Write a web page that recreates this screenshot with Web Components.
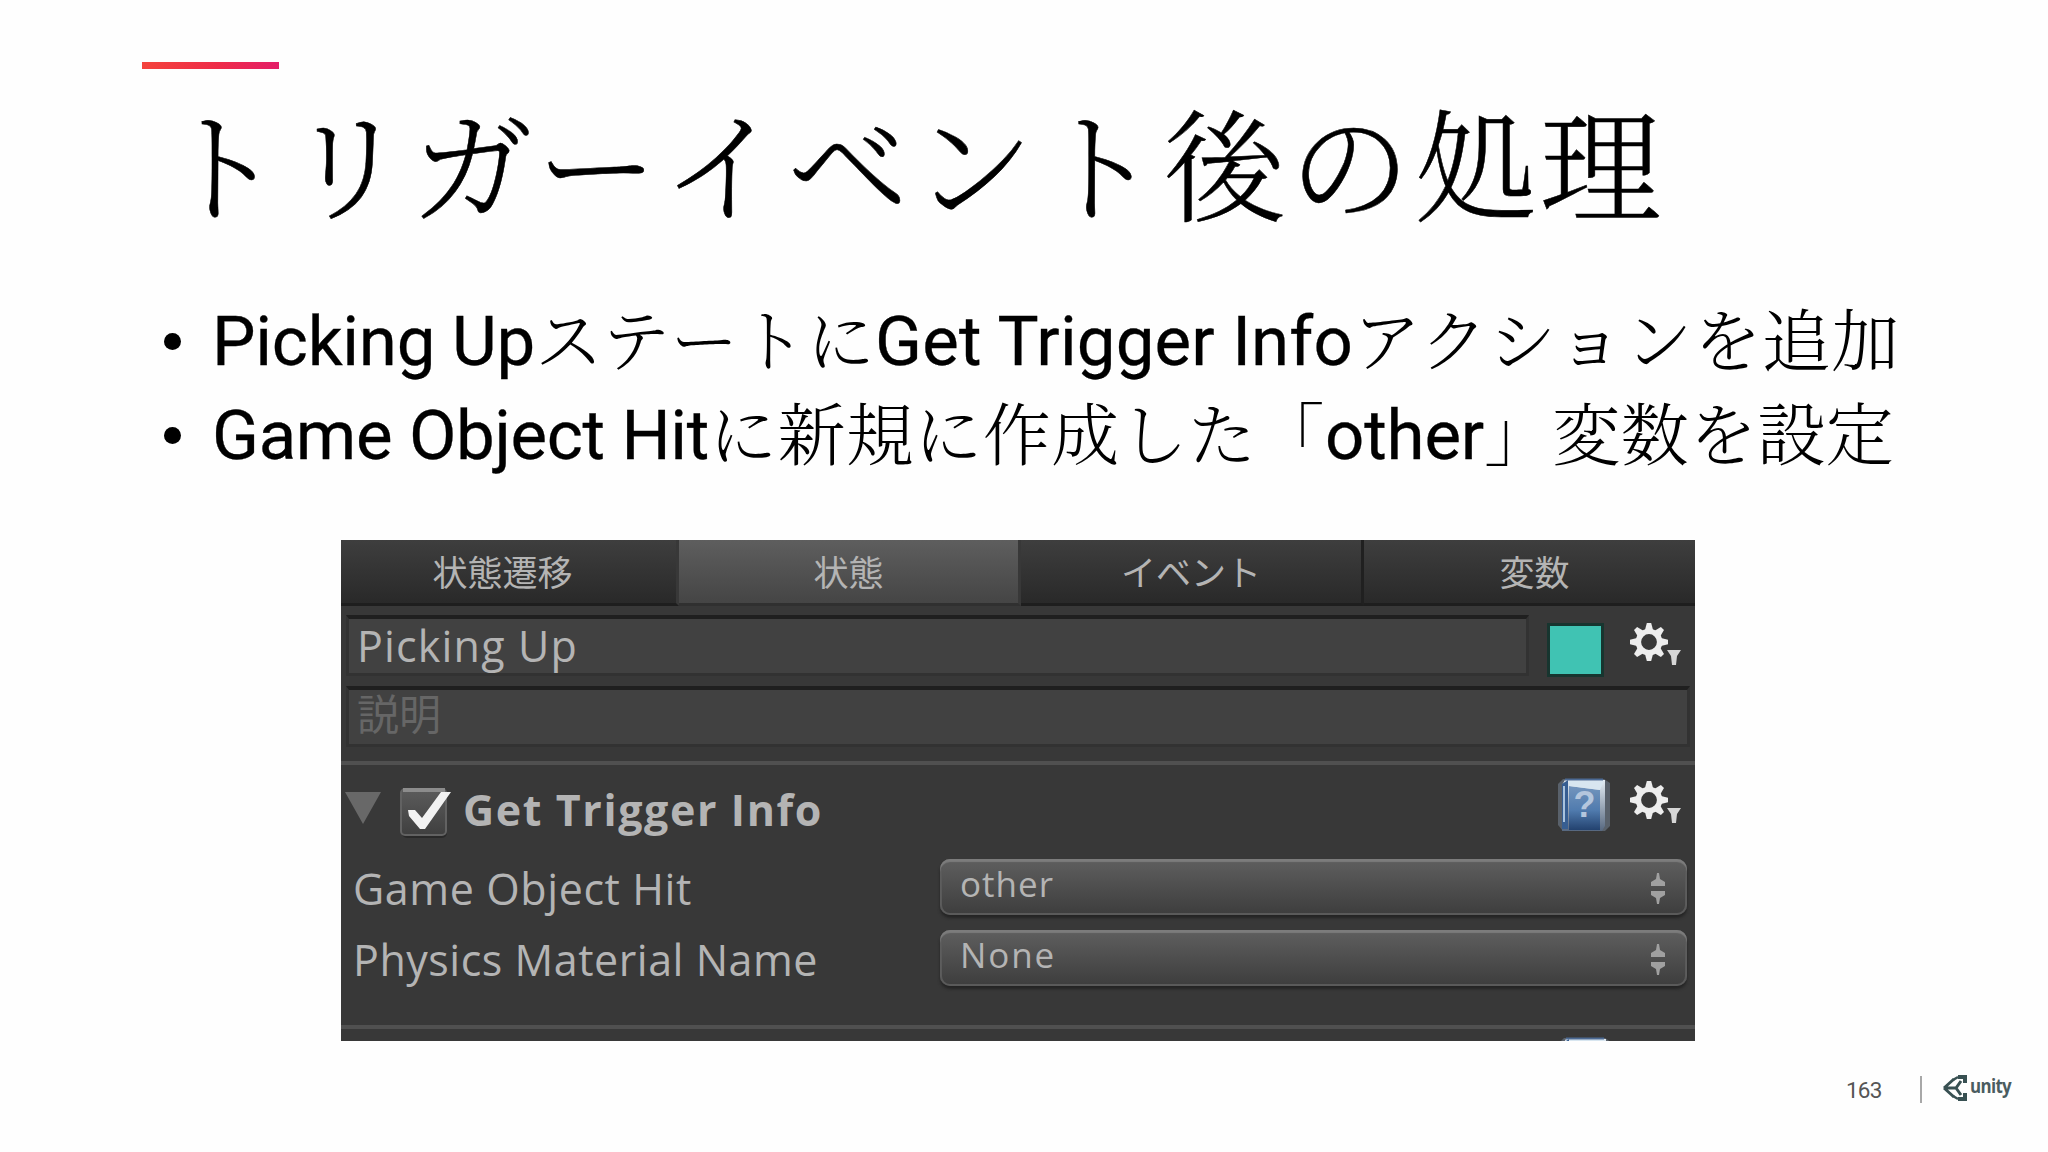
<!DOCTYPE html>
<html lang="ja">
<head>
<meta charset="utf-8">
<title>トリガーイベント後の処理</title>
<style>
    body{
        margin: 0;
        background: #fefefe;
        overflow: hidden;
    }
</style>
</head>
<body>
<slide-page>
    <slide-title slot="title"><fit-text width="1504">トリガーイベント後の処理</fit-text></slide-title>
    <bullet-item><fit-text width="323">Picking Up</fit-text><fit-text jp width="340">ステートに</fit-text><fit-text width="478">Get Trigger Info</fit-text><fit-text jp width="547">アクションを追加</fit-text></bullet-item>
    <bullet-item><fit-text width="497">Game Object Hit</fit-text><fit-text jp width="616">に新規に作成した「</fit-text><fit-text width="159">other</fit-text><fit-text jp width="410">」変数を設定</fit-text></bullet-item>
    <state-inspector slot="figure"></state-inspector>
    <slide-footer slot="footer">163</slide-footer>
</slide-page>

<script>
/**
 * Base element: puts style and template in an open shadow root.
 */
class BaseElement extends HTMLElement{
    constructor(){
        super();
        this.attachShadow({mode: 'open'});
        this.shadowRoot.innerHTML = this.render();
    }

    render(){
        return '<slot></slot>';
    }
}

/**
 * Inline text that spreads its letter spacing over a given width.
 */
class FitText extends BaseElement{
    render(){
        return `
            <style>
                :host{ display: inline; white-space: pre; }
                :host([jp]){
                    position: relative;
                    top: 1px;
                    font-family: "Noto Serif CJK JP", "Noto Sans CJK JP", sans-serif;
                    font-size: 68px;
                    font-weight: 300;
                    line-height: 1;
                }
            </style>
            <slot></slot>
        `.replace(/\s+<slot>/, '<slot>').trim();
    }

    connectedCallback(){
        const target = Number(this.getAttribute('width'));
        const count = [...this.textContent].length;
        const current = this.getBoundingClientRect().width;
        if (target && current) {
            this.style.letterSpacing = (target - current) / count + 'px';
        }
    }
}

class SlidePage extends BaseElement{
    render(){
        return `
            <style>
                :host{
                    display: flex;
                    flex-direction: column;
                    box-sizing: border-box;
                    width: 2048px;
                    height: 1152px;
                    padding-top: 62px;
                    background: #fefefe;
                    color: #000;
                    font-family: Roboto, "Noto Sans CJK JP", sans-serif;
                }
                .accent{
                    flex: none;
                    width: 137px;
                    height: 7px;
                    margin-left: 142px;
                    background: linear-gradient(90deg, #f4433c, #ee2b48 55%, #e41e68);
                }
                .bullets{ flex: none; height: 188px; margin: 65px 0 57px 161px; }
                .figure{ flex: none; margin-left: 341px; }
                .footer{ flex: 1; }
            </style>
            <div class="accent"></div>
            <slot name="title"></slot>
            <div class="bullets"><slot></slot></div>
            <div class="figure"><slot name="figure"></slot></div>
            <div class="footer"><slot name="footer"></slot></div>
        `;
    }
}

class SlideTitle extends BaseElement{
    render(){
        return `
            <style>
                :host{
                    display: block;
                    flex: none;
                    height: 140px;
                    margin: 21px 0 0 161px;
                    line-height: 140px;
                    font-family: "Noto Serif CJK JP", "Noto Sans CJK JP", sans-serif;
                    font-size: 122px;
                    font-weight: 300;
                    -webkit-text-stroke: .5px #000;
                    white-space: nowrap;
                }
            </style>
            <slot></slot>
        `;
    }
}

class BulletItem extends BaseElement{
    render(){
        return `
            <style>
                :host{
                    display: flex;
                    align-items: center;
                    height: 94px;
                    line-height: 94px;
                    font-size: 69px;
                    font-weight: 400;
                    -webkit-text-stroke: .3px #000;
                    white-space: nowrap;
                }
                ::slotted([jp]){ -webkit-text-stroke: 0; }
                i{ width: 17px; height: 17px; margin: 0 31px 2px 3px; border-radius: 50%; background: #000; }
            </style>
            <i></i><div><slot></slot></div>
        `;
    }
}

/**
 * One tab of the inspector header.
 */
class InspectorTab extends BaseElement{
    render(){
        return `
            <style>
                :host{
                    display: block;
                    box-sizing: border-box;
                    text-align: center;
                    line-height: 62px;
                    font-family: "Noto Sans CJK JP", sans-serif;
                    font-size: 35px;
                    color: #b4b4b4;
                    background: linear-gradient(#3e3e3e, #292929);
                    border-bottom: 3px solid #1e1e1e;
                    border-right: 3px solid #202020;
                }
                :host([active]){
                    background: linear-gradient(#5e5e5e, #454545);
                    border-bottom-color: #303030;
                    border-right-color: #383838;
                }
                :host(:first-child){ padding-right: 12px; border-right-color: #383838; }
                :host(:last-child){ padding-left: 10px; border-right: 0; }
            </style>
            <slot></slot>
        `;
    }
}

class TextField extends BaseElement{
    render(){
        return `
            <style>
                :host{
                    display: flex;
                    flex: none;
                    align-items: center;
                    box-sizing: border-box;
                    height: 61px;
                    padding-left: 8px;
                    padding-bottom: 1px;
                    background: #414141;
                    border: 3px solid #323232;
                    border-top: 4px solid #1f1f1f;
                    color: #b4b4b4;
                    line-height: 40px;
                }
                :host([placeholder]){ padding-bottom: 7px; color: #666; font-size: 42px; }
            </style>
            <slot></slot>
        `;
    }
}

class GearIcon extends BaseElement{
    render(){
        let teeth = '';
        for (let a = 0; a < 360; a += 45) {
            teeth += `<path d="M-4 -12L-2.2 -19H2.2L4 -12z" transform="rotate(${a})"/>`;
        }
        return `
            <style>
                :host{ display: block; width: 54px; height: 48px; }
                svg{ display: block; }
            </style>
            <svg width="54" height="48" fill="#ededed">
                <g transform="translate(21 20)">
                    <circle r="10.6" fill="none" stroke="#ededed" stroke-width="5.4"/>
                    ${teeth}
                </g>
                <path d="M39 28H53L49 34L48 43H44L43 34z" fill="#d6d6d6"/>
            </svg>
        `;
    }
}

/**
 * Blue help book, with its question mark passed in the slot.
 */
class HelpIcon extends BaseElement{
    render(){
        return `
            <style>
                :host{ display: grid; width: 54px; height: 56px; }
                svg, span{ grid-area: 1 / 1; }
                span{
                    padding: 0 0 0 1px;
                    text-align: center;
                    font: 700 36px/56px "Liberation Sans", sans-serif;
                    color: #b4c6dd;
                }
            </style>
            <svg width="54" height="56">
                <defs>
                    <linearGradient id="cover" x2="0" y2="1">
                        <stop offset="0" stop-color="#7395bd"/>
                        <stop offset=".55" stop-color="#507bae"/>
                        <stop offset="1" stop-color="#23426f"/>
                    </linearGradient>
                    <linearGradient id="edge" x2="0" y2="1">
                        <stop offset="0" stop-color="#e4edf4"/>
                        <stop offset="1" stop-color="#56677f"/>
                    </linearGradient>
                </defs>
                <path d="M6 2H47L53 6V49L48 54H6L1 48V7z" fill="#59616b"/>
                <path d="M8 3H48V49L45 54H5V8z" fill="url(#edge)"/>
                <path d="M5 7L11 3V52H5z" fill="#375e91"/>
                <path d="M7 9V45" stroke="#a9c3dd" stroke-width="2"/>
                <path d="M12 9L43 13V53H12z" fill="url(#cover)"/>
                <path d="M12 4H47L43 13L12 9z" fill="#d8e6f0"/>
                <path d="M8 2.5H46" stroke="#4c6a94" stroke-width="2"/>
            </svg>
            <span><slot></slot></span>
        `;
    }
}

class PopupField extends BaseElement{
    render(){
        return `
            <style>
                :host{
                    display: flex;
                    align-items: center;
                    justify-content: space-between;
                    box-sizing: border-box;
                    width: 747px;
                    height: 56px;
                    padding: 0 20px;
                    border-radius: 10px;
                    background: linear-gradient(#5f5f5f, #3d3d3d);
                    box-shadow: inset 0 3px 1px #7c7c7c, inset 0 0 0 2px #5a5a5a, 0 3px 3px #242424;
                    color: #b4b4b4;
                    font-size: 35px;
                    line-height: 48px;
                }
                div{ padding-bottom: 7px; }
                svg{ margin-top: 4px; }
            </style>
            <div><slot></slot></div>
            <svg width="18" height="32" fill="#a0a0a0"><path d="M8 0L10 0L11 6L16 9V13H2V9L7 6zM2 18H16V22L11 25L10 31H8L7 25L2 22z"/></svg>
        `;
    }
}

/**
 * PlayMaker style state panel with tabs, fields and one action.
 */
class StateInspector extends BaseElement{
    render(){
        return `
            <style>
                :host{
                    display: flex;
                    flex-direction: column;
                    width: 1354px;
                    height: 501px;
                    background: #383838;
                    overflow: hidden;
                    color: #b4b4b4;
                    font-family: "Open Sans", "Noto Sans CJK JP", sans-serif;
                    font-size: 43px;
                }
                .tabs, .name, .action, .param{ flex: none; }
                .tabs{ display: grid; grid-template-columns: 338px 342px 343px 331px; height: 66px; }
                .name{ display: flex; margin: 9px 0 0 5px; height: 61px; }
                .name text-field{ width: 1183px; }
                .color{ box-sizing: border-box; width: 57px; height: 54px; margin: 8px 0 0 18px; background: #40c3b3; border: 3px solid #17352f; }
                .name gear-icon{ margin: 7px 0 0 24px; }
                .note{ margin: 10px 5px 0; }
                hr{ flex: none; width: 100%; height: 4px; margin: 0; border: 0; background: #505050; }
                .first{ margin-top: 14px; }
                .action{ display: flex; height: 84px; margin-left: 4px; }
                .fold{ margin-top: 27px; }
                .check{ margin: 22px 0 0 19px; }
                .action b{ flex: 1; margin-left: 9px; line-height: 90px; font-weight: 700; }
                .action help-icon{ margin-top: 12px; }
                .action gear-icon{ margin: 15px 13px 0 17px; }
                .param{ display: flex; justify-content: space-between; height: 71px; margin: 0 8px 0 12px; }
                .param span{ line-height: 79px; }
                .param popup-field{ margin-top: 10px; }
                .last{ margin-top: 34px; }
                .next{ margin: 7px 0 0 1217px; }
            </style>
            <div class="tabs">
                <inspector-tab>状態遷移</inspector-tab>
                <inspector-tab active>状態</inspector-tab>
                <inspector-tab>イベント</inspector-tab>
                <inspector-tab>変数</inspector-tab>
            </div>
            <div class="name">
                <text-field><fit-text width="221">Picking Up</fit-text></text-field>
                <div class="color"></div>
                <gear-icon></gear-icon>
            </div>
            <text-field class="note" placeholder>説明</text-field>
            <hr class="first">
            <div class="action">
                <svg class="fold" width="36" height="32"><path d="M0 0H36L18 32z" fill="#686868"/></svg>
                <svg class="check" width="54" height="56">
                    <defs><linearGradient id="box" x2="0" y2="1"><stop offset="0" stop-color="#5c5c5c"/><stop offset="1" stop-color="#3f3f3f"/></linearGradient></defs>
                    <rect x="2" y="5" width="45" height="46" rx="5" fill="#292929"/>
                    <rect x="1" y="2" width="45" height="46" rx="4" fill="url(#box)" stroke="#626262" stroke-width="2"/>
                    <path d="M3 3H45" stroke="#8c8c8c" stroke-width="4"/>
                    <path d="M8 23H15L22 31L41 5H51L25 42H20L9 29z" fill="#f2f2f2"/>
                </svg>
                <b><fit-text width="360">Get Trigger Info</fit-text></b>
                <help-icon>?</help-icon>
                <gear-icon></gear-icon>
            </div>
            <div class="param">
                <span><fit-text width="339">Game Object Hit</fit-text></span>
                <popup-field><fit-text width="94">other</fit-text></popup-field>
            </div>
            <div class="param">
                <span><fit-text width="465">Physics Material Name</fit-text></span>
                <popup-field><fit-text width="96">None</fit-text></popup-field>
            </div>
            <hr class="last">
            <help-icon class="next"></help-icon>
        `;
    }
}

class SlideFooter extends BaseElement{
    render(){
        return `
            <style>
                :host{
                    display: flex;
                    align-items: center;
                    height: 28px;
                    margin: 34px 0 0 1846px;
                    color: #555;
                    font-size: 22.5px;
                    letter-spacing: -.8px;
                    line-height: 28px;
                }
                .page{ width: 74px; padding-top: 1px; }
                .line{ width: 2px; height: 27px; margin-right: 21px; background: #a8a8a8; }
            </style>
            <div class="page"><slot></slot></div>
            <div class="line"></div>
            <svg width="76" height="32" fill="none" stroke="#385052">
                <path d="M1 15L11 6M1 15L11 24M2 15H13L18 8M13 15L18 22" stroke-width="3"/>
                <path d="M10 7L15 4" stroke-width="2.5"/>
                <path d="M10 23L15 26" stroke-width="2.5"/>
                <path d="M15 4H22V10M15 26H22V20" stroke-width="4"/>
                <text x="27" y="20" font-family="Open Sans, sans-serif" font-size="20" font-weight="700" fill="#4a5c60" stroke="none" textLength="41" lengthAdjust="spacingAndGlyphs">unity</text>
            </svg>
        `;
    }
}

// fit-text goes last, so that the fonts of its parents are set when it measures
customElements.define('slide-page', SlidePage);
customElements.define('slide-title', SlideTitle);
customElements.define('bullet-item', BulletItem);
customElements.define('inspector-tab', InspectorTab);
customElements.define('text-field', TextField);
customElements.define('gear-icon', GearIcon);
customElements.define('help-icon', HelpIcon);
customElements.define('popup-field', PopupField);
customElements.define('state-inspector', StateInspector);
customElements.define('slide-footer', SlideFooter);
customElements.define('fit-text', FitText);
</script>
</body>
</html>
